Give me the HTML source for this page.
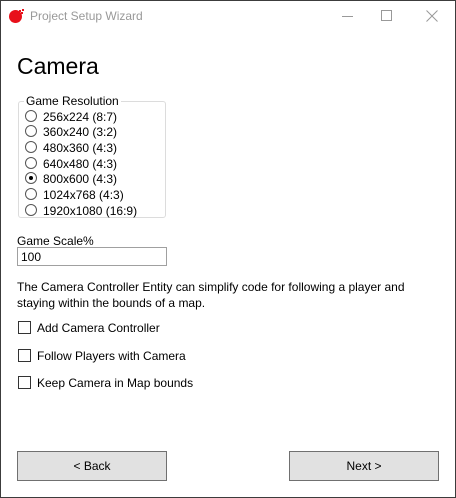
<!DOCTYPE html>
<html><head><style>
*{margin:0;padding:0;box-sizing:border-box}
body{width:456px;height:498px;background:#fff;font-family:"Liberation Sans",sans-serif;font-size:12px;color:#000;position:relative;overflow:hidden}
.win{position:absolute;left:0;top:0;width:456px;height:498px;border:1px solid #3c3c3c}
.a{position:absolute;white-space:nowrap}
.r{position:absolute;left:25px;width:12px;height:12px;border:1px solid #555;border-radius:50%;background:#fff}
.rl{position:absolute;left:43px;line-height:14px}
.cb{position:absolute;left:18px;width:13px;height:13px;border:1px solid #333;background:#fff}
.btn{position:absolute;top:451px;width:150px;height:30px;background:#e1e1e1;border:1px solid #707070;text-align:center;line-height:29px}
</style></head><body>
<div class="win"></div>
<svg class="a" style="left:8px;top:8px" width="17" height="16" viewBox="0 0 17 16"><circle cx="7.5" cy="8.5" r="6.5" fill="#e8101a"/><rect x="11" y="2" width="2" height="2" fill="#e8101a"/><rect x="13" y="4" width="2" height="2" fill="#e8101a"/><rect x="14" y="1" width="2" height="2" fill="#e8101a"/></svg>
<div class="a" style="left:30px;top:9px;color:#999;font-size:12px">Project Setup Wizard</div>
<div class="a" style="left:342px;top:16px;width:11px;height:1px;background:#999"></div>
<div class="a" style="left:381px;top:10px;width:11px;height:11px;border:1px solid #999"></div>
<svg class="a" style="left:426px;top:10px" width="12" height="12"><path d="M0.5 0.5L11.5 11.5M11.5 0.5L0.5 11.5" stroke="#999" stroke-width="1"/></svg>
<div class="a" style="left:17px;top:53px;font-size:23px">Camera</div>
<div class="a" style="left:18px;top:101px;width:148px;height:117px;border:1px solid #dcdcdc;border-radius:3px"></div>
<div class="a" style="left:24px;top:94px;background:#fff;padding:0 2px;line-height:14px">Game Resolution</div>
<div class="r" style="top:110px"></div><div class="rl" style="top:110px">256x224 (8:7)</div>
<div class="r" style="top:125px"></div><div class="rl" style="top:125px">360x240 (3:2)</div>
<div class="r" style="top:141px"></div><div class="rl" style="top:141px">480x360 (4:3)</div>
<div class="r" style="top:157px"></div><div class="rl" style="top:157px">640x480 (4:3)</div>
<div class="r" style="top:172px"><div style="position:absolute;left:3px;top:3px;width:4px;height:4px;border-radius:50%;background:#000"></div></div><div class="rl" style="top:172px">800x600 (4:3)</div>
<div class="r" style="top:188px"></div><div class="rl" style="top:188px">1024x768 (4:3)</div>
<div class="r" style="top:204px"></div><div class="rl" style="top:204px">1920x1080 (16:9)</div>
<div class="a" style="left:17px;top:234px">Game Scale%</div>
<div class="a" style="left:17px;top:247px;width:150px;height:19px;border:1px solid #a0a0a0;padding-left:3px;line-height:18px">100</div>
<div class="a" style="left:17px;top:279px;line-height:16px">The Camera Controller Entity can simplify code for following a player and<br>staying within the bounds of a map.</div>
<div class="cb" style="top:321px"></div><div class="a" style="left:37px;top:321px">Add Camera Controller</div>
<div class="cb" style="top:349px"></div><div class="a" style="left:37px;top:349px">Follow Players with Camera</div>
<div class="cb" style="top:376px"></div><div class="a" style="left:37px;top:376px">Keep Camera in Map bounds</div>
<div class="btn" style="left:17px">&lt; Back</div>
<div class="btn" style="left:289px">Next &gt;</div>
</body></html>
